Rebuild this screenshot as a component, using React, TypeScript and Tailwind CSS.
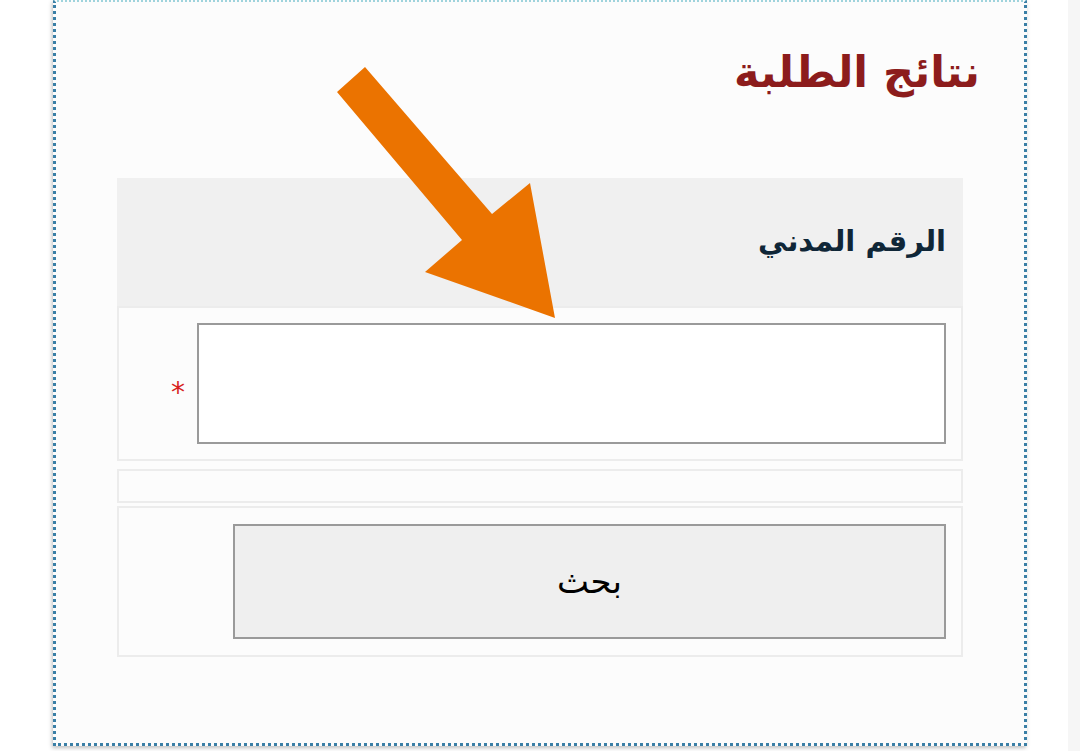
const arabic = { fontFamily: '"DejaVu Sans", "Noto Sans", sans-serif' };

export default function App() {
  return (
    <div className="relative flex h-[751px] w-[1080px] overflow-hidden bg-white">
      <div
        dir="rtl"
        style={arabic}
        className="ml-[53px] h-[746px] w-[974px] shrink-0 border-[3px] border-t-2 border-t-[#9fd3dc] border-dotted border-[#3a7fa6] bg-[#fcfcfc] shadow-[-1px_2px_4px_rgba(0,0,0,0.25)]"
      >
        <h1 className="pr-[44px] pt-[44px] text-[43px] font-bold leading-[52px] text-[#8c1c1c]">
          نتائج الطلبة
        </h1>

        <div className="mx-[61px] mt-[80px] flex flex-col">
          <div className="flex h-[128px] items-center bg-[#f0f0f0] pr-[17px]">
            <span className="text-[29px] font-bold text-[#0f2637]">الرقم المدني</span>
          </div>

          <div className="flex h-[155px] items-center border-2 border-[#ececec] pr-[15px]">
            <input
              type="text"
              className="h-[121px] w-[749px] border-2 border-[#9a9a9a] bg-white outline-none"
            />
            <span className="mr-[12px] mt-[18px] text-[28px] leading-none text-[#d81e1e]">*</span>
          </div>

          <div className="mt-[8px] h-[34px] border-2 border-[#ececec]" />

          <div className="mt-[3px] flex h-[151px] items-center border-2 border-[#ececec] pr-[15px]">
            <button
              type="button"
              className="h-[115px] w-[713px] border-2 border-[#9a9a9a] bg-[#efefef] text-[34px] text-black"
            >
              بحث
            </button>
          </div>
        </div>
      </div>
      <div className="ml-[41px] h-full flex-1 bg-[#f6f6f6]" />

      <svg
        className="pointer-events-none absolute inset-0"
        width="1080"
        height="751"
        viewBox="0 0 1080 751"
      >
        <polygon
          points="337,92 365,67 492,214 530,183 555,318 425,272 462,240"
          fill="#eb7300"
        />
      </svg>
    </div>
  );
}
